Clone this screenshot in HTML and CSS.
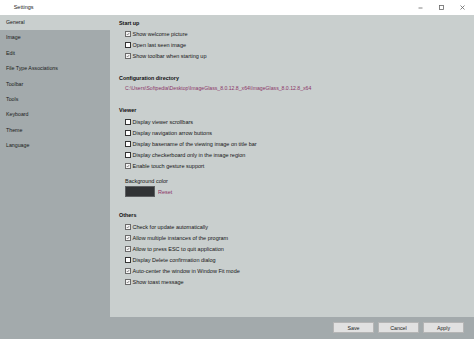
FILE: index.html
```html
<!DOCTYPE html>
<html lang="en">
<head>
<meta charset="utf-8">
<title>Settings</title>
<link rel="stylesheet" href="styles.css">
</head>
<body>
<div class="window">
  <header class="titlebar">
    <span class="title">Settings</span>
    <div class="controls">
      <span class="ctl"><svg width="5" height="5" viewBox="0 0 5 5"><path d="M0.5 3 H4.5" stroke="#666" stroke-width="0.8"/></svg></span>
      <span class="ctl"><svg width="5" height="5" viewBox="0 0 5 5"><rect x="0.5" y="0.5" width="4" height="4" fill="none" stroke="#666" stroke-width="0.8"/></svg></span>
      <span class="ctl"><svg width="5" height="5" viewBox="0 0 5 5"><path d="M0.5 0.5 L4.5 4.5 M4.5 0.5 L0.5 4.5" stroke="#666" stroke-width="0.8"/></svg></span>
    </div>
  </header>
  <div class="body">
    <nav class="sidebar">
      <div class="nav-item active">General</div>
      <div class="nav-item">Image</div>
      <div class="nav-item">Edit</div>
      <div class="nav-item">File Type Associations</div>
      <div class="nav-item">Toolbar</div>
      <div class="nav-item">Tools</div>
      <div class="nav-item">Keyboard</div>
      <div class="nav-item">Theme</div>
      <div class="nav-item">Language</div>
    </nav>
    <div class="main">
      <div class="content">
        <section class="sec sec-startup">
          <h2 class="heading">Start up</h2>
          <div class="rows">
            <div class="row"><span class="box checked"><svg viewBox="0 0 6 6"><path d="M1.2 3.1 L2.5 4.4 L4.9 1.4" fill="none" stroke="#333" stroke-width="0.8"/></svg></span><span>Show welcome picture</span></div>
            <div class="row"><span class="box"></span><span>Open last seen image</span></div>
            <div class="row"><span class="box checked"><svg viewBox="0 0 6 6"><path d="M1.2 3.1 L2.5 4.4 L4.9 1.4" fill="none" stroke="#333" stroke-width="0.8"/></svg></span><span>Show toolbar when starting up</span></div>
          </div>
        </section>
        <section class="sec sec-config">
          <h2 class="heading">Configuration directory</h2>
          <div class="path">C:\Users\Softpedia\Desktop\ImageGlass_8.0.12.8_x64\ImageGlass_8.0.12.8_x64</div>
        </section>
        <section class="sec sec-viewer">
          <h2 class="heading">Viewer</h2>
          <div class="rows rows-gap">
            <div class="row"><span class="box"></span><span>Display viewer scrollbars</span></div>
            <div class="row"><span class="box"></span><span>Display navigation arrow buttons</span></div>
            <div class="row"><span class="box"></span><span>Display basename of the viewing image on title bar</span></div>
            <div class="row"><span class="box"></span><span>Display checkerboard only in the image region</span></div>
            <div class="row"><span class="box checked"><svg viewBox="0 0 6 6"><path d="M1.2 3.1 L2.5 4.4 L4.9 1.4" fill="none" stroke="#333" stroke-width="0.8"/></svg></span><span>Enable touch gesture support</span></div>
          </div>
          <div class="bg-label">Background color</div>
          <div class="bg-row"><span class="swatch"></span><span class="link">Reset</span></div>
        </section>
        <section class="sec sec-others">
          <h2 class="heading">Others</h2>
          <div class="rows rows-gap">
            <div class="row"><span class="box checked"><svg viewBox="0 0 6 6"><path d="M1.2 3.1 L2.5 4.4 L4.9 1.4" fill="none" stroke="#333" stroke-width="0.8"/></svg></span><span>Check for update automatically</span></div>
            <div class="row"><span class="box checked"><svg viewBox="0 0 6 6"><path d="M1.2 3.1 L2.5 4.4 L4.9 1.4" fill="none" stroke="#333" stroke-width="0.8"/></svg></span><span>Allow multiple instances of the program</span></div>
            <div class="row"><span class="box checked"><svg viewBox="0 0 6 6"><path d="M1.2 3.1 L2.5 4.4 L4.9 1.4" fill="none" stroke="#333" stroke-width="0.8"/></svg></span><span>Allow to press ESC to quit application</span></div>
            <div class="row"><span class="box"></span><span>Display Delete confirmation dialog</span></div>
            <div class="row"><span class="box checked"><svg viewBox="0 0 6 6"><path d="M1.2 3.1 L2.5 4.4 L4.9 1.4" fill="none" stroke="#333" stroke-width="0.8"/></svg></span><span>Auto-center the window in Window Fit mode</span></div>
            <div class="row"><span class="box checked"><svg viewBox="0 0 6 6"><path d="M1.2 3.1 L2.5 4.4 L4.9 1.4" fill="none" stroke="#333" stroke-width="0.8"/></svg></span><span>Show toast message</span></div>
          </div>
        </section>
      </div>
      <footer class="footer">
        <button class="btn">Save</button>
        <button class="btn">Cancel</button>
        <button class="btn">Apply</button>
      </footer>
    </div>
  </div>
</div>
</body>
</html>
```
FILE: styles.css
```css
* { box-sizing: border-box; margin: 0; padding: 0; }
html, body { width: 474px; height: 339px; overflow: hidden; }
body {
  font-family: "Liberation Sans", Arial, sans-serif;
  font-size: 5.5px;
  color: #161616;
  background: #c9cfce;
}
.window {
  width: 474px;
  height: 339px;
  display: grid;
  grid-template-rows: 15px 1fr;
}
.titlebar {
  background: #ffffff;
  display: flex;
  align-items: center;
  padding: 0 1px 1px 13.7px;
}
.title { font-size: 5.5px; color: #222; }
.controls { margin-left: auto; display: flex; }
.ctl {
  width: 21px;
  height: 14px;
  display: flex;
  align-items: center;
  justify-content: center;
}
.ctl svg { display: block; }
.body {
  display: flex;
  min-height: 0;
}
.sidebar {
  width: 110px;
  background: #a3aaac;
  flex-shrink: 0;
}
.nav-item {
  height: 15.4px;
  line-height: 15.4px;
  padding-left: 6px;
  font-size: 5.25px;
  color: #1a1a1a;
}
.nav-item.active { background: #c9cfce; }
.main {
  flex: 1;
  display: flex;
  flex-direction: column;
}
.content {
  flex: 1;
  background: #c9cfce;
  padding: 3px 0 0 9px;
}
.heading {
  font-size: 5.4px;
  font-weight: bold;
  line-height: 10px;
  color: #0e0e0e;
}
.rows { margin-left: 6px; }
.rows-gap { margin-top: 1.5px; }
.row {
  height: 11px;
  display: flex;
  align-items: center;
}
.box {
  width: 6px;
  height: 6px;
  border: 0.8px solid #333;
  background: #fff;
  margin-right: 1.5px;
  flex-shrink: 0;
  display: block;
}
.box.checked { background: #f4f4f4; border-color: #6a6a6a; }
.box svg { width: 100%; height: 100%; display: block; }
.sec-config { margin-top: 12px; }
.path {
  margin-left: 6px;
  line-height: 10px;
  font-size: 5.15px;
  color: #8a3467;
}
.sec-viewer { margin-top: 12px; }
.bg-label {
  margin: 4.5px 0 0 6px;
  line-height: 10px;
}
.bg-row {
  margin-left: 6px;
  display: flex;
  align-items: center;
  gap: 3px;
}
.swatch {
  width: 30px;
  height: 11px;
  background: #313335;
  border: 0.6px solid #5c5e60;
}
.link { color: #8a3467; }
.sec-others { margin-top: 13px; }
.footer {
  height: 22.3px;
  background: #a3aaac;
  display: flex;
  justify-content: flex-end;
  align-items: flex-start;
  gap: 4px;
  padding: 5px 10px 0 0;
}
.btn {
  width: 41px;
  height: 11.6px;
  background: #e1e1e1;
  border: 0.6px solid #b5b5b5;
  font-family: "Liberation Sans", Arial, sans-serif;
  font-size: 5.3px;
  color: #1c1c1c;
}
```
